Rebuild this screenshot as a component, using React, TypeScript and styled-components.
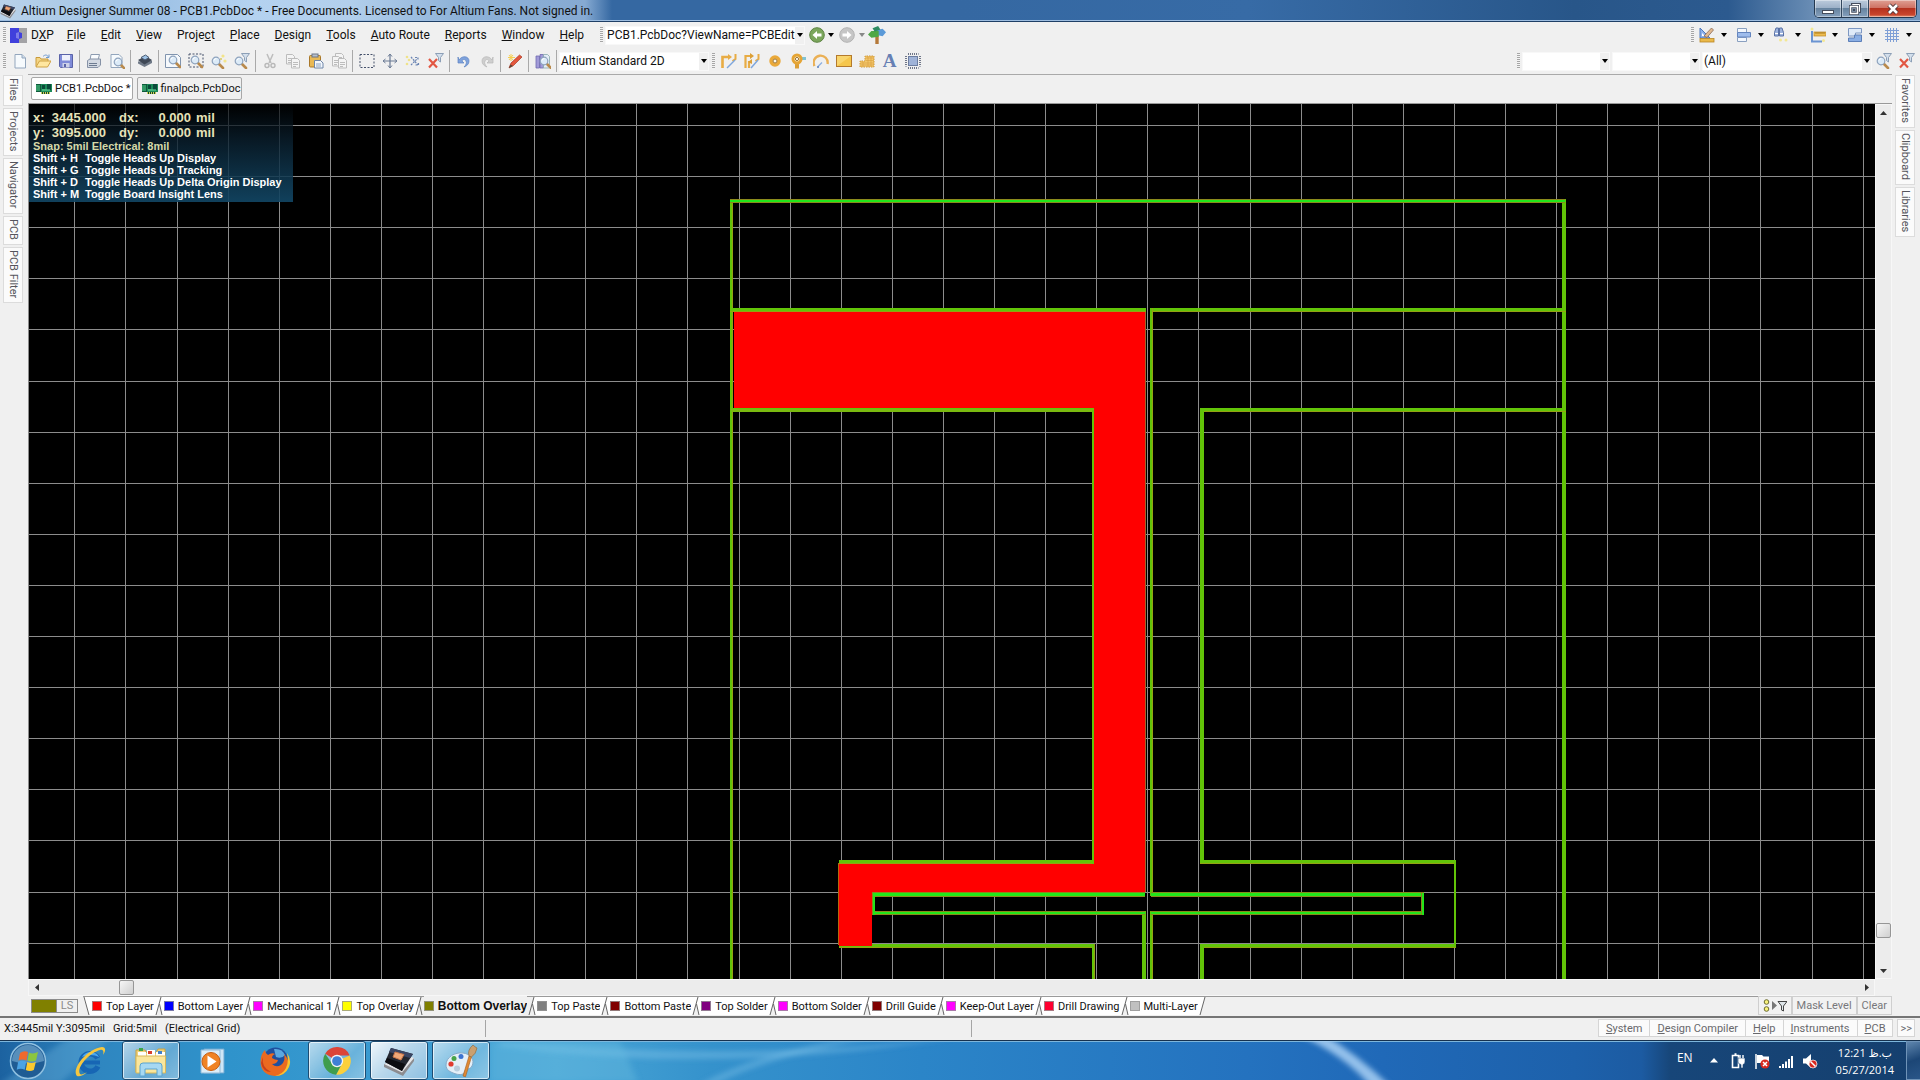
import React, { ReactNode } from "react";
import styled, { createGlobalStyle, css } from "styled-components";

const GlobalStyle = createGlobalStyle`
  *, *::before, *::after { box-sizing: border-box; }
  html, body { margin: 0; padding: 0; overflow: hidden; }
  body { background: #f0f0f0; color: #111; font-family: Roboto, "Liberation Sans", sans-serif; font-size: 12px; }
  button, select, input { font: inherit; color: inherit; margin: 0; padding: 0; border: 0; background: none; border-radius: 0; }
  svg { display: block; flex: none; }
`;

const Desktop = styled.div`
  display: flex;
  flex-direction: column;
  height: 100vh;
`;

/* ---------- title bar ---------- */
const TitleBar = styled.header`
  display: flex;
  align-items: flex-start;
  height: 22px;
  flex: none;
  border-bottom: 1px solid #1f3f66;
  box-shadow: inset 0 -1px 0 #9dbde0;
  background:
    linear-gradient(90deg, #b9d2ea 0, #9cc0e4 150px, #b4d2f0 250px, #b2cfec 350px, #8eb2d8 460px, #86aad2 585px, rgba(134, 170, 210, 0) 612px),
    linear-gradient(90deg, #3568a2 0 50%, #376ba6 65%, #285689 82%, #2c5a8f 90%, #7f9fc2 96%, #6f93ba 100%);
`;
const TitleCaption = styled.div`
  display: flex;
  align-items: center;
  gap: 5px;
  height: 21px;
  flex: 1;
`;
const TitleText = styled.h1`
  margin: 0;
  font-size: 12px;
  font-weight: 400;
  line-height: 20px;
  white-space: nowrap;
`;
const WindowButtons = styled.div`
  display: flex;
  height: 18px;
  margin-right: 3px;
  border: 1px solid #24384f;
  border-top: 0;
  border-radius: 0 0 5px 5px;
  overflow: hidden;
`;
const WindowButton = styled.button<{ $close?: boolean }>`
  display: flex;
  align-items: center;
  justify-content: center;
  width: ${(p) => (p.$close ? 47 : 27)}px;
  border-right: ${(p) => (p.$close ? "0" : "1px solid #33475e")};
  box-shadow: inset 0 0 0 1px rgba(255, 255, 255, 0.4);
  background: ${(p) =>
    p.$close
      ? "linear-gradient(#dfa094 0, #cf7264 45%, #b5321f 50%, #c8442c 85%, #e08a6c 100%)"
      : "linear-gradient(#bccbdc 0, #9db1c8 45%, #66839f 50%, #86a0bd 100%)"};
`;

/* ---------- menu and tool bars ---------- */
const Bar = styled.div`
  display: flex;
  align-items: center;
  height: 26px;
  padding-right: 2px;
  flex: none;
  background: #f0f0f0;
`;
const Spacer = styled.div`flex: 1;`;
const Grip = styled.span`
  width: 3px;
  height: 16px;
  margin: 0 2px 0 3px;
  flex: none;
  background: repeating-linear-gradient(#a6a6a6 0 1px, #f4f4f4 1px 2px);
`;
const MenuList = styled.nav`
  display: flex;
  align-items: center;
  margin-right: 5px;
`;
const MenuItem = styled.button`
  height: 22px;
  padding: 0 8px 0 7px;
  white-space: nowrap;
  u { text-underline-offset: 1px; }
`;
const DxpItem = styled(MenuItem)`
  display: flex;
  align-items: center;
  gap: 4px;
  padding: 0 6px 0 2px;
`;
const IconButton = styled.button<{ $w?: number }>`
  display: flex;
  align-items: center;
  justify-content: center;
  width: ${(p) => p.$w ?? 23}px;
  height: 22px;
  flex: none;
`;
const Separator = styled.span`
  width: 1px;
  height: 22px;
  margin: 0 2px;
  flex: none;
  background: #a9a9a9;
`;
const SelectBox = styled.label<{ $w: number }>`
  display: grid;
  grid-template-columns: 1fr 9px;
  align-items: center;
  width: ${(p) => p.$w}px;
  height: 19px;
  flex: none;
  background: #fff;
  border: 1px solid #f8f8f8;
  select {
    grid-area: 1 / 1 / 2 / 3;
    appearance: none;
    width: 100%;
    height: 17px;
    padding: 0 6px 0 1px;
    overflow: hidden;
  }
  i {
    grid-area: 1 / 2 / 2 / 3;
    display: flex;
    align-items: center;
    justify-content: center;
    height: 17px;
    background: #f0f0f0;
    pointer-events: none;
  }
`;
const Cluster = styled.div<{ $gap?: number }>`
  display: flex;
  align-items: center;
  gap: ${(p) => p.$gap ?? 0}px;
`;
const DropIcon = styled.button`
  display: flex;
  align-items: center;
  gap: 6px;
  width: 37px;
  padding-left: 3px;
  height: 22px;
`;

/* ---------- work area ---------- */
const WorkArea = styled.div`
  display: flex;
  flex: 1;
  min-height: 0;
`;
const Rail = styled.aside`
  display: flex;
  flex-direction: column;
  align-items: flex-start;
  gap: 2px;
  flex: none;
  width: 28px;
  padding: 1px 0 0 3px;
`;
const RailTab = styled.button`
  width: 20px;
  padding: 2px 0 4px;
  writing-mode: vertical-rl;
  font-size: 11px;
  line-height: 18px;
  color: #55555c;
  background: #fbfbfb;
  border: 1px solid #dcdcdc;
`;
const Center = styled.main`
  display: flex;
  flex-direction: column;
  flex: 1;
  min-width: 0;
  border-top: 1px solid #a9a9a9;
`;
const DocTabs = styled.div`
  display: flex;
  gap: 4px;
  height: 29px;
  padding: 2px 3px 3px;
  border-bottom: 1px solid #999;
  flex: none;
`;
const DocTab = styled.button<{ $active?: boolean }>`
  display: flex;
  align-items: center;
  gap: 3px;
  height: 23px;
  padding: 0 1px 0 4px;
  font-size: 11px;
  border: 1px solid #a8a8a8;
  border-radius: 2px;
  background: ${(p) => (p.$active ? "#fff" : "#f0f0f0")};
`;
const Editor = styled.div`
  display: grid;
  grid-template-columns: minmax(0, 1fr) 17px;
  grid-template-rows: minmax(0, 1fr) 17px;
  flex: 1;
  min-height: 0;
`;
const Board = styled.section`
  position: relative;
  overflow: hidden;
  background: #000;
  > svg { width: 100%; height: 100%; }
`;
const Hud = styled.div`
  position: absolute;
  left: 1px;
  top: 0;
  width: 264px;
  padding: 6px 4px 2px;
  color: #fff;
  background: linear-gradient(rgba(0, 0, 0, 0.65), rgba(10, 30, 44, 0.8) 35%, rgba(18, 70, 100, 0.92));
  font: bold 11px/12px "Liberation Sans", Arial, sans-serif;
`;
const HudCoords = styled.div`
  display: grid;
  grid-template-columns: 14px 59px 30px 55px 1fr;
  font-size: 13px;
  line-height: 15px;
  color: #e6e2b8;
  span:nth-child(5n + 2), span:nth-child(5n + 4) { text-align: right; }
  span:nth-child(5n + 3) { padding-left: 13px; }
  span:nth-child(5n) { padding-left: 5px; }
`;
const HudSnap = styled.p`
  margin: 0;
  color: #d5d9a8;
`;
const HudKeys = styled.dl`
  display: grid;
  grid-template-columns: 52px 1fr;
  margin: 0;
  dt, dd { margin: 0; white-space: nowrap; }
`;
const ScrollTrack = styled.div<{ $vertical?: boolean }>`
  display: flex;
  flex-direction: ${(p) => (p.$vertical ? "column" : "row")};
  align-items: center;
  background: #ececec;
  border: 1px solid #f7f7f7;
`;
const ScrollArrow = styled.button`
  display: flex;
  align-items: center;
  justify-content: center;
  width: 15px;
  height: 15px;
  flex: none;
`;
const ScrollGap = styled.span<{ $grow: number }>`flex: ${(p) => p.$grow} 1 0;`;
const ScrollThumb = styled.span`
  width: 15px;
  height: 15px;
  flex: none;
  border: 1px solid #969696;
  border-radius: 2px;
  background: linear-gradient(135deg, #f6f6f6, #cfcfcf);
`;

/* ---------- layer tabs ---------- */
const LayerBar = styled.div`
  display: flex;
  height: 22px;
  padding: 0 28px;
  flex: none;
  font-size: 11px;
  border-bottom: 2px solid #757575;
`;
const LayerSet = styled.button`
  display: grid;
  grid-template-columns: 25px 20px;
  align-items: center;
  height: 14px;
  margin: 3px 5px 0 3px;
  line-height: 12px;
  color: #8a8a8a;
  border: 1px solid #8c8c8c;
  span:first-child { height: 12px; background: #808000; border-right: 1px solid #8c8c8c; }
`;
const LayerStrip = styled.div`
  display: flex;
  flex: 1;
  border-top: 1px solid #9a9a9a;
`;
const LayerTab = styled.button<{ $active?: boolean }>`
  display: flex;
  align-items: center;
  gap: 4px;
  height: 18px;
  white-space: nowrap;
  background: ${(p) => (p.$active ? "#f0f0f0" : "#fff")};
  ${(p) => p.$active && css`margin-top: -1px; height: 19px; font: bold 12px "Liberation Sans", Arial, sans-serif;`}
`;
const Swatch = styled.span<{ $c: string }>`
  width: 10px;
  height: 10px;
  flex: none;
  background: ${(p) => p.$c};
  border: 1px solid rgba(150, 150, 150, 0.8);
`;
const MaskButton = styled.button`
  display: flex;
  align-items: center;
  justify-content: center;
  height: 19px;
  padding: 0 4px;
  color: #77777b;
  border: 1px solid #cfcfcf;
  background: #f2f2f2;
`;

/* ---------- status bar ---------- */
const StatusBar = styled.footer`
  display: grid;
  grid-template-columns: 482px 486px 1fr auto;
  align-items: center;
  height: 22px;
  padding: 0 5px 2px 4px;
  flex: none;
  font-size: 11px;
`;
const StatusCell = styled.div`
  display: flex;
  align-items: center;
  gap: 8px;
  height: 17px;
  border-right: 1px solid #a5a5a5;
  &:nth-child(3) { border: 0; }
`;
const Panels = styled.div`
  display: flex;
  color: #68686c;
`;
const PanelButton = styled.button`
  height: 18px;
  padding: 0 7px;
  margin-left: -1px;
  white-space: nowrap;
  background: #fbfbfb;
  border: 1px solid #d5d5d5;
  &:last-child { padding: 0 2px; margin-left: 4px; }
`;

/* ---------- task bar ---------- */
const TaskBar = styled.div`
  position: relative;
  display: flex;
  align-items: center;
  height: 40px;
  flex: none;
  border-top: 1px solid #17324f;
  box-shadow: inset 0 1px 0 #7db6dc;
  background: linear-gradient(90deg, #1c62a0 0, #2f86c0 5%, #2f93cb 12%, #3f9fd4 24%, #49a6d6 29%, #3592cc 37%, #2b85c8 48%, #2472bf 65%, #2069b8 72%, #1d61ab 82%, #1c5ba2 85.5%, #174679 87%, #153f6e 100%);
`;
const Rays = styled.svg`
  position: absolute;
  left: 0;
  top: 0;
  width: 100%;
  height: 100%;
`;
const TaskList = styled.div`
  position: relative;
  display: flex;
  align-items: center;
  gap: 4px;
  height: 39px;
`;
const TaskButton = styled.button<{ $state?: "open" | "front" }>`
  display: flex;
  align-items: center;
  justify-content: center;
  width: 58px;
  height: 39px;
  border-radius: 3px;
  border: 1px solid transparent;
  ${(p) =>
    p.$state &&
    css`
      border-color: #1d4c72;
      box-shadow: inset 0 0 0 1px rgba(255, 255, 255, 0.65);
      background: ${p.$state === "front"
        ? "linear-gradient(135deg, #f0f6fb, #b9d8ec 45%, #8dc0e2)"
        : "linear-gradient(135deg, rgba(255,255,255,0.65), rgba(255,255,255,0.25) 60%, rgba(255,255,255,0.4))"};
    `}
`;
const StartButton = styled(TaskButton)`width: 56px;`;
const Tray = styled.div`
  position: relative;
  display: flex;
  align-items: center;
  height: 39px;
  margin-left: auto;
  color: #fff;
  font: 12px "Open Sans", "DejaVu Sans", sans-serif;
`;
const Language = styled.button`
  margin-right: 9px;
  padding-bottom: 6px;
`;
const TrayButton = styled.button`
  display: flex;
  align-items: center;
  justify-content: center;
  width: 24px;
  height: 24px;
`;
const Clock = styled.time`
  margin: 0 12px 0 14px;
  font-size: 11px;
  line-height: 17px;
  text-align: center;
  white-space: nowrap;
`;
const ShowDesktop = styled.button`
  width: 14px;
  height: 39px;
  border: 1px solid #6f93b8;
  border-right: 0;
  background: linear-gradient(160deg, #5f86ae, #1c4676 50%, #2a5688);
`;

/* ---------- drawings ---------- */
const Svg = ({ s = 16, vb, children }: { s?: number; vb?: string; children: ReactNode }) => (
  <svg width={s} height={s} viewBox={vb ?? "0 0 16 16"} aria-hidden="true">{children}</svg>
);
const Caret = ({ c = "#000" }: { c?: string }) => (
  <svg width="6" height="4" viewBox="0 0 6 4" aria-hidden="true"><path d="M0 0h6L3 4z" fill={c} /></svg>
);
const Lens = ({ x = 0, y = 0 }: { x?: number; y?: number }) => (
  <g transform={`translate(${x} ${y})`}>
    <path d="M8 8l4 4" stroke="#b98a4c" strokeWidth="2.6" strokeLinecap="round" />
    <circle cx="5" cy="5" r="3.8" fill="#dcebf8" stroke="#8ea3bd" strokeWidth="1.2" />
    <path d="M3 4.500a2.400 2.400 0 0 1 2.400-2" stroke="#fff" fill="none" />
  </g>
);
const Funnel = ({ x = 0, y = 0 }: { x?: number; y?: number }) => (
  <path transform={`translate(${x} ${y})`} d="M0.500.500h8L5.500 4.500v4.500L3.500 7.500v-3z" fill="#d3dfec" stroke="#8c9fb6" />
);
const Page = ({ x = 0, y = 0 }: { x?: number; y?: number }) => (
  <g transform={`translate(${x} ${y})`} stroke="#bcbcbc">
    <path d="M.500.500h6l2 2v7.500h-8z" fill="#f4f4f4" />
    <path d="M2 4.500h5M2 6.500h5M2 8.500h3" />
  </g>
);

const icons: Record<string, ReactNode> = {
  new: <Svg><path d="M3 1.500h7l3.500 3.500v10H3z" fill="#f6fafd" stroke="#93a6bd" /><path d="M10 1.500V5h3.500" fill="#cfdcea" stroke="#93a6bd" /></Svg>,
  open: <Svg><path d="M1 13.500V4.500h4l1 1.500h7v3" fill="#f4d584" stroke="#c89a3a" /><path d="M1 14L4.500 8H16l-3.500 6z" fill="#ffe7a0" stroke="#cfa245" /><path d="M8 3.500c2-2 4-2 5.500.5M14 1.500V4.500h-3" fill="none" stroke="#6f9ad0" /></Svg>,
  save: <Svg><path d="M1.500 1.500h13v13h-12l-1-1z" fill="#7f8bd8" stroke="#5a63a8" /><path d="M4 2h8v5.500H4z" fill="#eef0fb" /><path d="M4.500 10h7v4.500h-7z" fill="#cdd2e8" /><path d="M6 11h2v3H6z" fill="#5a63a8" /></Svg>,
  print: <Svg><path d="M5 1.500h8.500L12 7H4z" fill="#fafcfe" stroke="#8c9bb0" /><path d="M1.500 7.500L4 6h10.500v6L12 14.500H1.500z" fill="#d3d9e2" stroke="#8692a6" /><path d="M3 10.500h8M3 12.500h8" stroke="#6d7b90" /></Svg>,
  preview: <Svg><path d="M2 1.500h8l3 3v10H2z" fill="#f6fafd" stroke="#93a6bd" /><Lens x={4} y={4} /></Svg>,
  layers: <Svg><path d="M1 8.500v2L7.500 14 15 10V7.500z" fill="#707a88" /><path d="M1 7L8.500 3 15 7 7.500 11.500z" fill="#3f4856" /><path d="M4 4.500L8.500 2 12 4.500 8 7z" fill="#9fc4e8" stroke="#4a5a70" /></Svg>,
  zoomDoc: <Svg><path d="M.500 1.500h12l3 3v10H.500z" fill="#f6f9fc" stroke="#8094ae" /><Lens x={3} y={2} /></Svg>,
  zoomArea: <Svg><rect x="1" y="1" width="14" height="13" fill="none" stroke="#44506a" strokeDasharray="2 1.500" /><Lens x={2} y={2} /></Svg>,
  zoomSel: <Svg><Lens x={0} y={3} /><circle cx="12" cy="3" r="1.600" fill="#f3e58a" /><circle cx="14" cy="8" r="1.600" fill="#f3e58a" /><circle cx="10" cy="6" r="1" fill="#d8c860" /></Svg>,
  zoomFilter: <Svg><Lens x={0} y={3} /><Funnel x={7} y={0} /></Svg>,
  cut: <Svg><path d="M5 1l4 9M11 1L7 10" stroke="#bdbdbd" strokeWidth="1.500" /><circle cx="5" cy="12.500" r="2" fill="none" stroke="#b8b8b8" strokeWidth="1.400" /><circle cx="11" cy="12.500" r="2" fill="none" stroke="#b8b8b8" strokeWidth="1.400" /></Svg>,
  copy: <Svg><Page x={1} y={1} /><Page x={6} y={5} /></Svg>,
  paste: <Svg><rect x="1.500" y="2.500" width="11" height="11.500" rx="1" fill="#e9b955" stroke="#a9782a" /><rect x="4" y="1" width="6" height="3" fill="#b8c0cc" stroke="#6d7686" /><path d="M6.500 7.500h6l2.500 2.500v5h-8.500z" fill="#f4f8fd" stroke="#6f86a8" /><path d="M8 11h5M8 13h5" stroke="#8ca3c2" /></Svg>,
  pasteArr: <Svg><Page x={4} y={0} /><Page x={1} y={3} /><Page x={7} y={5} /></Svg>,
  marquee: <Svg><rect x="1" y="1.500" width="14" height="13" fill="none" stroke="#44506a" strokeDasharray="2 1.500" /></Svg>,
  move: <Svg><path d="M8 1.500v13M1.500 8h13" stroke="#6a7a94" strokeWidth="1.200" /><path d="M6 3.500L8 1l2 2.500M6 12.500L8 15l2-2.500M3.500 6L1 8l2.500 2M12.500 6L15 8l-2.500 2" fill="none" stroke="#6a7a94" /></Svg>,
  shuffle: <Svg><path d="M6 12L13 5M6 4l7 8M10 4.500h3v3M10.500 12h3V9" fill="none" stroke="#6c86b4" strokeWidth="1.200" strokeDasharray="2 1" /><circle cx="2" cy="4" r="1.300" fill="#efe28a" /><circle cx="4" cy="7" r="1.300" fill="#efe28a" /><circle cx="2" cy="11" r="1.300" fill="#efe28a" /></Svg>,
  clearFilter: <Svg><Funnel x={7} y={0} /><path d="M1 6l8 8.500M9 6l-8 8.500" stroke="#e25743" strokeWidth="2.200" /></Svg>,
  undo: <Svg><path d="M3 7c3-5 10-4 10 1 0 3-2 5-5 6 2-2 3-4 2-6-1-2-3-2-4 0l2 2H2V4z" fill="#7ea2dc" stroke="#5c82c2" strokeWidth=".7" /></Svg>,
  redo: <Svg><path d="M13 7c-3-5-10-4-10 1 0 3 2 5 5 6-2-2-3-4-2-6 1-2 3-2 4 0l-2 2h6V4z" fill="#cfcfcf" stroke="#b8b8b8" strokeWidth=".7" /></Svg>,
  pencil: <Svg><path d="M2 15l2-5L12.500 2l2.500 2-8.500 8.500z" fill="#e4573d" stroke="#a83a24" strokeWidth=".7" /><path d="M2 15l1.500-3.500L6 13z" fill="#5a4638" /><path d="M4 1v7M1 4.500h7M2 2l4 5M6 2L2 7" stroke="#f6cf52" /></Svg>,
  browse: <Svg><path d="M1 3h3.500v12H1zM5 1.500h3.500V15H5z" fill="#a19ad8" stroke="#6f6ab0" strokeWidth=".8" /><path d="M8.500 1.500h4l2 2V15h-6z" fill="#e4edf7" stroke="#8aa" strokeWidth=".8" /><Lens x={4} y={3} /></Svg>,
  route: <Svg><path d="M1.500 15V4h6" fill="none" stroke="#e8ac44" strokeWidth="2.600" /><path d="M7 1l4 3-4 3z" fill="#e8ac44" /><path d="M14.500 1v5l-3 2" fill="none" stroke="#e8ac44" strokeWidth="2" /><path d="M6 15l8-8" stroke="#7ea6dc" strokeWidth="1.500" /></Svg>,
  routeDiff: <Svg><path d="M1.500 15V3h6M5 15V8" fill="none" stroke="#e8ac44" strokeWidth="2.200" /><path d="M6 0l4 3-4 3zM4 9l4-3v5z" fill="#dc9f36" /><path d="M14.500 1v5l-3 2" fill="none" stroke="#e8ac44" strokeWidth="2" /><path d="M7 15l7-8" stroke="#7ea6dc" strokeWidth="1.500" /></Svg>,
  pad: <Svg><circle cx="8" cy="8" r="4" fill="#fff3d4" stroke="#eaa93a" strokeWidth="3.400" /><circle cx="8" cy="8" r="2" fill="#fdf8ec" stroke="#9d7430" /></Svg>,
  via: <Svg><path d="M9 4h7v3H9z" fill="#7fc3d4" /><path d="M5 8h4v7.500H5z" fill="#dc9f36" /><circle cx="7" cy="6" r="4" fill="#fff3d4" stroke="#e5a536" strokeWidth="3" /><circle cx="7" cy="6" r="1.600" fill="#fff" stroke="#9d7430" /></Svg>,
  arc: <Svg><path d="M1.500 13A7 7 0 1 1 14.500 11" fill="none" stroke="#eab055" strokeWidth="2.400" /><path d="M5 13.500l4-4" stroke="#8aaee0" strokeWidth="1.200" /><circle cx="5" cy="14" r="1" fill="#5a7fc0" /></Svg>,
  fill: <Svg><rect x=".500" y="2.500" width="15" height="11" fill="#f5c64c" stroke="#b47a2c" /><path d="M1 13L15 3H1z" fill="#fbdf84" opacity=".6" /></Svg>,
  polygon: <Svg><path d="M1 14V8h5V3h9v11z" fill="#f3c76a" stroke="#cf9636" strokeDasharray="1.500 1" /><path d="M2 10h13M2 12h13M7 5h8M7 7.500h8M9 3v11M12 3v11M4 9v5" stroke="#d8a040" strokeWidth=".6" /></Svg>,
  part: <Svg><rect x="3.500" y="3.500" width="9" height="9" fill="#9fb3d8" stroke="#6c7da0" /><path d="M3 1h10.500M3 15h10.500" stroke="#444e66" strokeWidth="1.500" strokeDasharray="1 1" /><path d="M1 3v10.500M15 3v10.500" stroke="#444e66" strokeWidth="1.500" strokeDasharray="1 1" /></Svg>,
  utility: <Svg><path d="M1 1v10h10z" fill="#8cb0ea" stroke="#4f78bc" /><path d="M3 6v3h3z" fill="#fff" /><path d="M5 9L12.500 1l2 2L8 10.500z" fill="#e0b890" stroke="#80604a" strokeWidth=".7" /><rect x="1" y="11.500" width="14" height="3.500" fill="#eab94a" stroke="#b98524" strokeWidth=".8" /></Svg>,
  align: <Svg><path d="M1.500 1.500h9v4h-9zM1.500 10.500h9v4h-9z" fill="#f4f8fd" stroke="#8aa0c0" /><path d="M1.500 5.500h13v4.500h-13z" fill="#9fbdec" stroke="#6485bf" /></Svg>,
  find: <Svg><path d="M1.500 9V5.500L3 1h2.500v8zM10.500 9V5.500L9 1H6.500v8z" fill="#9db3dd" stroke="#5a72a6" /><path d="M2 6.500h3M7 6.500h3" stroke="#fff" /><circle cx="7.500" cy="13" r="1.500" fill="#f3e894" /><circle cx="13" cy="13" r="1.500" fill="#f3e894" /></Svg>,
  dimension: <Svg><path d="M2 4v10.500h10" fill="none" stroke="#6b94d2" strokeWidth="2" /><rect x="4" y="5" width="12" height="4" fill="#eebd50" stroke="#b98524" strokeWidth=".7" /><path d="M6 5v2M8 5v2M10 5v2M12 5v2M14 5v2" stroke="#8a6010" strokeWidth=".7" /><circle cx="2" cy="2" r="1.500" fill="#f3e894" /><circle cx="13.500" cy="13.500" r="1.500" fill="#f3e894" /></Svg>,
  room: <Svg><path d="M1.500 1.500h13v4.500h-6v3h-7z" fill="#dfeaf8" stroke="#7d97c2" /><path d="M1.500 14.500v-3.500h6V8h7v6.500z" fill="#8aaee4" stroke="#5c7fb8" /></Svg>,
  grid: <Svg><path d="M3.500 1v14M6.500 1v14M9.500 1v14M12.500 1v14M1 3.500h14M1 6.500h14M1 9.500h14M1 12.500h14" stroke="#7f9fd6" /></Svg>,
  applyFilter: <Svg><Lens x={0} y={3} /><Funnel x={7} y={0} /></Svg>,
  back: <Svg><circle cx="8" cy="8" r="7.300" fill="#7ba65c" stroke="#5d8442" /><path d="M3.500 8L8 4v2.500h4.500v3H8V12z" fill="#fff" /></Svg>,
  forward: <Svg><circle cx="8" cy="8" r="7.300" fill="#c6c6c6" stroke="#b2b2b2" /><path d="M12.500 8L8 4v2.500H3.500v3H8V12z" fill="#fff" /></Svg>,
  signpost: <Svg s={18}><path d="M6.500 6h3v10h-3z" fill="#b5793a" /><path d="M8 3.500L13 2.500l3 3-3 3.500-5-1z" fill="#5b9ad8" /><path d="M9.500 4.500H3L0 7.500l3 3 6.500-1z" fill="#4fa845" /><path d="M4 2l5-2 2 3-5 2z" fill="#2f8c62" /></Svg>,
};
const TextToolButton = styled(IconButton)`
  font: bold 19px/22px "Liberation Serif", "Times New Roman", serif;
  color: #6680b4;
`;

const AppIcon = ({ s = 16 }: { s?: number }) => (
  <svg width={s} height={s} viewBox="0 0 32 32" aria-hidden="true">
    <path d="M1 22l19 9 11-15v-3L1 19z" fill="#8c8c90" />
    <path d="M1 19l18 8.500L31 13l-3-1z" fill="#e6e6e8" />
    <path d="M2 17L8 3l22 6-11 17z" fill="#23262f" />
    <path d="M2 17l2-4 18 6-3 7z" fill="#0c0c10" />
    <path d="M8 3l22 6-3 4L6 7z" fill="#3a4563" />
    <path d="M12 7l9 2.500-3 5.500-8-3z" fill="#f0a878" stroke="#c9764a" />
  </svg>
);
const DocIcon = () => (
  <svg width="16" height="12" viewBox="0 0 16 12" aria-hidden="true">
    <rect x="0" y="1" width="16" height="8" fill="#1c8a58" />
    <path d="M0 1h5v8H0z" fill="#0f5a3c" /><path d="M1 2v6M3 2v6" stroke="#58d890" />
    <path d="M6 2h3v4H6zM11 1h4v6h-4z" fill="#0b4a3a" /><path d="M5 9h9v2H5z" fill="#cdd15a" /><path d="M6.500 9v2M8.500 9v2M10.500 9v2M12.500 9v2" stroke="#164a2c" />
    <path d="M6 7h8" stroke="#6fe0a0" />
  </svg>
);
const DxpLogo = () => (
  <svg width="17" height="15" viewBox="0 0 17 15" aria-hidden="true">
    <path d="M8 0h9v15H8z" fill="#a3a3a6" />
    <path d="M0 0h9v4l3 1v5l-3 1v4H0z" fill="#4040dc" /><path d="M6 5l3-1v7L6 10z" fill="#7b7be8" />
  </svg>
);

/* ---------- board canvas ---------- */
const GREEN = "#62c408", OLIVE = "#93a312", BRIGHT = "#22e61a";
const ORIGIN = { x: 28, y: 104 };
const gridX = Array.from({ length: 37 }, (_, k) => Math.floor(74.85 + 51.094 * k));
const gridY = Array.from({ length: 18 }, (_, k) => Math.floor(125.6 + 51.094 * k));
type Seg = [number, number, number, number, ("b")?];
const tracks: Seg[] = [
  [730, 201, 3, 900], [1562, 199, 4, 900],
  [730, 308, 416, 4], [1151, 308, 415, 4],
  [731, 408, 363, 4], [1092, 410, 2, 453],
  [1150, 308, 3, 588], [1200, 408, 366, 4], [1200, 408, 4, 455],
  [839, 860, 255, 4], [1200, 860, 256, 4], [1454, 861, 2, 87],
  [839, 944, 255, 4], [1200, 944, 256, 4],
  [1092, 944, 3, 100], [1142, 911, 4, 100], [1150, 911, 3, 100], [1200, 944, 4, 100],
  [730, 199, 835, 4, "b"],
  [872, 892, 273, 5, "b"], [872, 911, 273, 4, "b"], [1151, 892, 273, 5, "b"], [1151, 911, 273, 4, "b"],
  [872, 893, 3, 22, "b"], [1421, 893, 3, 22, "b"],
];
const Artwork = () => (
  <svg role="img" aria-label="PCB layout" shapeRendering="crispEdges">
    <g transform={`translate(${-ORIGIN.x} ${-ORIGIN.y})`}>
      {gridX.map((x) => <rect key={x} x={x} y={104} width={1} height={2000} fill="#8c8c8c" />)}
      {gridY.map((y) => <rect key={y} x={28} y={y} width={3000} height={1} fill="#8c8c8c" />)}
      <rect x={28} y={104} width={1} height={2000} fill="#8c8c8c" />
      {tracks.map(([x, y, w, h, kind], i) => {
        const flat = w > h;
        return (
          <g key={i}>
            <rect x={x} y={y} width={w} height={h} fill={kind ? "#8a8a1c" : OLIVE} />
            {flat
              ? <rect x={x} y={kind ? y + 1 : y} width={w} height={kind ? h - 2 : h - 1} fill={kind ? BRIGHT : GREEN} />
              : <rect x={kind ? x + 1 : x} y={y} width={w > 3 ? w : Math.max(w - 1, 2)} height={h} fill={kind ? BRIGHT : GREEN} />}
          </g>
        );
      })}
      <path d="M734 312H1145V892H872V946H839V864H1094V408H734z" fill="#f00" />
      <rect x={731} y={409} width={363} height={3} fill="#7aba10" />
      <rect x={1092} y={410} width={2} height={454} fill={GREEN} />
      <rect x={1145} y={312} width={1} height={580} fill="#a0662a" />
      <rect x={838} y={863} width={1} height={82} fill="#b06a10" />
    </g>
  </svg>
);

/* ---------- data ---------- */
const menus: [string, string, string][] = [
  ["", "F", "ile"], ["", "E", "dit"], ["", "V", "iew"], ["Proje", "c", "t"], ["", "P", "lace"], ["", "D", "esign"],
  ["", "T", "ools"], ["", "A", "uto Route"], ["", "R", "eports"], ["", "W", "indow"], ["", "H", "elp"],
];
const toolGroups = [
  ["new", "open", "save"], ["print", "preview"], ["layers"], ["zoomDoc", "zoomArea", "zoomSel", "zoomFilter"],
  ["cut", "copy", "paste", "pasteArr"], ["marquee", "move", "shuffle", "clearFilter"], ["undo", "redo"], ["pencil"], ["browse"],
];
const placeTools = ["route", "routeDiff", "pad", "via", "arc", "fill", "polygon"];
const layers: [string, string][] = [
  ["Top Layer", "#f00"], ["Bottom Layer", "#00f"], ["Mechanical 1", "#f0f"], ["Top Overlay", "#ff0"], ["Bottom Overlay", "#808000"],
  ["Top Paste", "#808080"], ["Bottom Paste", "#800000"], ["Top Solder", "#800080"], ["Bottom Solder", "#f0f"],
  ["Drill Guide", "#800000"], ["Keep-Out Layer", "#f0f"], ["Drill Drawing", "#ff0030"], ["Multi-Layer", "#c0c0c0"],
];
const activeLayer = "Bottom Overlay";
const panels: [string, string][] = [["S", "ystem"], ["D", "esign Compiler"], ["H", "elp"], ["I", "nstruments"], ["P", "CB"]];

const Combo = ({ w, label, value }: { w: number; label: string; value: string }) => (
  <SelectBox $w={w}>
    <select aria-label={label} defaultValue={value}><option>{value}</option></select>
    <i><Caret /></i>
  </SelectBox>
);
/* slanted joint between two neighbouring layer tabs */
const Joint = ({ left, right }: { left: string; right?: string }) => (
  <svg width="10" height="19" viewBox="0 0 10 19" aria-hidden="true">
    <path d="M0 0h7L2 18H0z" fill={left} />
    {right && <path d="M7 0h3v18H8L5.500 7z" fill={right} />}
    <path d={right ? "M2 18L7 0M5.500 7L8 18" : "M2 18L7 0"} fill="none" stroke="#666" />
  </svg>
);
const tabFill = (name?: string) => (name === undefined ? undefined : name === activeLayer ? "#f0f0f0" : "#fff");

export default function App() {
  return (
    <Desktop>
      <GlobalStyle />
      <TitleBar>
        <TitleCaption>
          <AppIcon />
          <TitleText>Altium Designer Summer 08 - PCB1.PcbDoc * - Free Documents. Licensed to For Altium Fans. Not signed in.</TitleText>
        </TitleCaption>
        <WindowButtons>
          <WindowButton aria-label="Minimize"><svg width="12" height="14" viewBox="0 0 12 14"><rect x=".5" y="8.5" width="11" height="3" fill="#fff" stroke="#444c5c" /></svg></WindowButton>
          <WindowButton aria-label="Restore"><svg width="14" height="14" viewBox="0 0 14 14"><path d="M4.500 2.500h7v7h-7z" fill="none" stroke="#444c5c" strokeWidth="3" /><path d="M4.500 2.500h7v7h-7z" fill="none" stroke="#fff" /><path d="M2.500 4.500h7v7h-7z" fill="#7b8da3" stroke="#444c5c" strokeWidth="3" /><path d="M2.500 4.500h7v7h-7z" fill="none" stroke="#fff" strokeWidth="1.500" /><path d="M5 7h2v2H5z" fill="#444c5c" /></svg></WindowButton>
          <WindowButton $close aria-label="Close"><svg width="14" height="12" viewBox="0 0 14 12"><path d="M3 2l8 8M11 2l-8 8" stroke="#4a3438" strokeWidth="4.500" /><path d="M3 2l8 8M11 2l-8 8" stroke="#fff" strokeWidth="2.600" /></svg></WindowButton>
        </WindowButtons>
      </TitleBar>

      <Bar>
        <Grip />
        <MenuList>
          <DxpItem><DxpLogo /><span>D<u>X</u>P</span></DxpItem>
          {menus.map(([a, b, c]) => <MenuItem key={b + c}>{a}<u>{b}</u>{c}</MenuItem>)}
        </MenuList>
        <Grip />
        <Combo w={200} label="Document address" value="PCB1.PcbDoc?ViewName=PCBEdit" />
        <Cluster>
          <IconButton aria-label="Back">{icons.back}</IconButton><Caret />
          <IconButton aria-label="Forward" $w={25}>{icons.forward}</IconButton><Caret c="#888" />
          <IconButton aria-label="Navigate">{icons.signpost}</IconButton>
        </Cluster>
        <Spacer />
        <Grip />
        {["utility", "align", "find", "dimension", "room", "grid"].map((n) => (
          <DropIcon key={n} aria-label={n}>{icons[n]}<Caret /></DropIcon>
        ))}
      </Bar>

      <Bar>
        <Grip />
        {toolGroups.map((g, i) => (
          <React.Fragment key={i}>
            {i > 0 && <Separator />}
            {g.map((n) => <IconButton key={n} aria-label={n}>{icons[n]}</IconButton>)}
          </React.Fragment>
        ))}
        <Separator />
        <Combo w={150} label="View configuration" value="Altium Standard 2D" />
        <Grip />
        {placeTools.map((n) => <IconButton key={n} aria-label={n}>{icons[n]}</IconButton>)}
        <TextToolButton aria-label="Place string">A</TextToolButton>
        <IconButton aria-label="Place component">{icons.part}</IconButton>
        <Spacer />
        <Grip />
        <Cluster $gap={2}>
          <Combo w={88} label="Net filter" value="" />
          <Combo w={88} label="Component filter" value="" />
          <Combo w={170} label="Filter" value="(All)" />
        </Cluster>
        <IconButton aria-label="Apply filter">{icons.applyFilter}</IconButton>
        <IconButton aria-label="Clear filter">{icons.clearFilter}</IconButton>
      </Bar>

      <WorkArea>
        <Rail>{["Files", "Projects", "Navigator", "PCB", "PCB Filter"].map((t) => <RailTab key={t}>{t}</RailTab>)}</Rail>
        <Center>
          <DocTabs>
            <DocTab $active><DocIcon />PCB1.PcbDoc *</DocTab>
            <DocTab><DocIcon />finalpcb.PcbDoc</DocTab>
          </DocTabs>
          <Editor>
            <Board>
              <Artwork />
              <Hud>
                <HudCoords>
                  <span>x:</span><span>3445.000</span><span>dx:</span><span>0.000</span><span>mil</span>
                  <span>y:</span><span>3095.000</span><span>dy:</span><span>0.000</span><span>mil</span>
                </HudCoords>
                <HudSnap>Snap: 5mil Electrical: 8mil</HudSnap>
                <HudKeys>
                  <dt>Shift + H</dt><dd>Toggle Heads Up Display</dd>
                  <dt>Shift + G</dt><dd>Toggle Heads Up Tracking</dd>
                  <dt>Shift + D</dt><dd>Toggle Heads Up Delta Origin Display</dd>
                  <dt>Shift + M</dt><dd>Toggle Board Insight Lens</dd>
                </HudKeys>
              </Hud>
            </Board>
            <ScrollTrack $vertical>
              <ScrollArrow aria-label="Scroll up"><svg width="7" height="4"><path d="M0 4L3.500 0 7 4z" fill="#333" /></svg></ScrollArrow>
              <ScrollGap $grow={803} /><ScrollThumb /><ScrollGap $grow={25} />
              <ScrollArrow aria-label="Scroll down"><svg width="7" height="4"><path d="M0 0h7L3.500 4z" fill="#333" /></svg></ScrollArrow>
            </ScrollTrack>
            <ScrollTrack>
              <ScrollArrow aria-label="Scroll left"><svg width="4" height="7"><path d="M4 0v7L0 3.500z" fill="#333" /></svg></ScrollArrow>
              <ScrollGap $grow={75} /><ScrollThumb /><ScrollGap $grow={1724} />
              <ScrollArrow aria-label="Scroll right"><svg width="4" height="7"><path d="M0 0v7l4-3.500z" fill="#333" /></svg></ScrollArrow>
            </ScrollTrack>
          </Editor>
        </Center>
        <Rail>{["Favorites", "Clipboard", "Libraries"].map((t) => <RailTab key={t}>{t}</RailTab>)}</Rail>
      </WorkArea>

      <LayerBar>
        <LayerSet aria-label="Layer sets"><span /><span>LS</span></LayerSet>
        <LayerStrip>
          <svg width="9" height="19" viewBox="0 0 9 19" aria-hidden="true"><path d="M0 0h9v18H6z" fill="#fff" /><path d="M1 0l5 18" stroke="#666" /></svg>
          {layers.map(([name, c], i) => (
            <React.Fragment key={name}>
              <LayerTab $active={name === activeLayer}><Swatch $c={c} />{name}</LayerTab>
              <Joint left={tabFill(name)!} right={tabFill(layers[i + 1]?.[0])} />
            </React.Fragment>
          ))}
        </LayerStrip>
        <MaskButton aria-label="Mask options">
          <svg width="24" height="13" viewBox="0 0 24 13"><circle cx="3.500" cy="3" r="2.300" fill="#f8f27a" stroke="#6b6b30" /><circle cx="3.500" cy="10" r="2.300" fill="#f8f27a" stroke="#6b6b30" /><path d="M9 2l5 4.500L9 11z" fill="#777" /><path d="M15 2.500h9L20.500 7v5l-2-1V7z" fill="#dfe6ea" stroke="#444" /></svg>
        </MaskButton>
        <MaskButton>Mask Level</MaskButton>
        <MaskButton>Clear</MaskButton>
      </LayerBar>

      <StatusBar>
        <StatusCell><span>X:3445mil Y:3095mil</span><span>Grid:5mil</span><span>(Electrical Grid)</span></StatusCell>
        <StatusCell />
        <StatusCell />
        <Panels>
          {panels.map(([a, b]) => <PanelButton key={b}><u>{a}</u>{b}</PanelButton>)}
          <PanelButton>&gt;&gt;</PanelButton>
        </Panels>
      </StatusBar>

      <TaskBar>
        <Rays viewBox="0 0 1920 40" preserveAspectRatio="none" aria-hidden="true">
          <defs>
            <filter id="soft" x="-20%" y="-20%" width="140%" height="140%"><feGaussianBlur stdDeviation="3" /></filter>
          </defs>
          <g filter="url(#soft)">
            <path d="M1295 -8Q1345 14 1372 48H1392Q1358 14 1322 -8z" fill="#a9d0f5" opacity=".85" />
            <path d="M500 6Q720 36 960 -4 740 22 500 0z" fill="#8ccbee" opacity=".35" />
            <path d="M700 44Q760 10 860 -4h16Q770 16 716 44z" fill="#8ccbee" opacity=".35" />
            <path d="M490 0h130l18 42H490z" fill="#6cc0e2" opacity=".35" />
            <path d="M0 44L70 -4h40L60 44z" fill="#7fc4e8" opacity=".3" />
          </g>
        </Rays>
        <TaskList>
          <StartButton aria-label="Start">
            <Svg s={38} vb="0 0 38 38">
              <circle cx="19" cy="19" r="17.500" fill="#1f5c94" stroke="#8fc0e0" strokeWidth="1.500" />
              <path d="M3 19a16 16 0 0 1 32 0q-16 5-32 0z" fill="#7db0d6" opacity=".6" />
              <path d="M11 11q4-3 8-1l-1.500 8.500q-4-2-8 0z" fill="#f06a2c" /><path d="M20 10.500q4 2 9-.5l-2 8.500q-4 2-8.500 0z" fill="#8cc63e" />
              <path d="M9.200 19.800q4-2 8 0l-1.500 8q-4-2-8 0z" fill="#4aa3e4" /><path d="M18.300 20q4 2 8.500 0l-2 8q-4 2-8 0z" fill="#fbc92e" />
            </Svg>
          </StartButton>
          <TaskButton aria-label="Internet Explorer">
            <Svg s={34} vb="0 0 34 34">
              <circle cx="18" cy="18.500" r="8.800" fill="none" stroke="#1766b4" strokeWidth="5.500" strokeDasharray="46.500 9" strokeDashoffset="-4" />
              <path d="M11 16.500h17v4H11z" fill="#1766b4" />
              <path d="M10 13q3-5 9-5 6 .5 8 5-8-4-17 0z" fill="#4aa8ee" />
              <path d="M5 32C-1 26 14 5 30 3c4 0 4 4 1 8 1-4 0-6-3-5C17 9 4 24 8 30c1 1 4 0 7-2-4 4-8 5-10 4z" fill="#f5c740" />
            </Svg>
          </TaskButton>
          <TaskButton $state="open" aria-label="Windows Explorer">
            <Svg s={34} vb="0 0 34 34">
              <path d="M2 6h9l2 3h9l2-4h7v23H2z" fill="#f0d27c" stroke="#c9a243" />
              <path d="M4 8h8v4H4zM13 6h8v6h-8zM22 8h9v5h-9z" fill="#fff" /><path d="M5 4h4v3H5z" fill="#3aa64a" /><path d="M14 7h4v3h-4z" fill="#d8402c" /><path d="M24 7h4v3h-4z" fill="#3f80cc" />
              <path d="M2 12h29.500v17H2z" fill="#fae69c" stroke="#d8b85a" />
              <path d="M6 32V22q0-3 3-3h16q3 0 3 3v10h-5v-7H11v7z" fill="#a6d8f2" stroke="#5aa4d0" />
            </Svg>
          </TaskButton>
          <TaskButton aria-label="Media Player">
            <Svg s={30} vb="0 0 30 30">
              <path d="M6 3h20v24H6z" fill="#cfe6f6" stroke="#6da8d2" /><path d="M3 4h19v23H3z" fill="#dcedf8" stroke="#8fb9d8" />
              <circle cx="13" cy="15.500" r="9" fill="#f08324" stroke="#c85e10" /><path d="M9.500 9.500l9 6-9 6z" fill="#fff" />
            </Svg>
          </TaskButton>
          <TaskButton aria-label="Firefox">
            <Svg s={32} vb="0 0 32 32">
              <circle cx="16.500" cy="15" r="12.500" fill="#1f4f9e" /><path d="M15 4q8-1 11 6-3 4-9 2z" fill="#5ba8e0" />
              <path d="M6 5q0 3 3 5 4-3 7-1-3 1-3 4 3 2 6 2-1 4-6 4 4 4 9 1 5-4 3-11 6 6 4 13-3 9-13 9Q2 30 1.500 17 1.500 9 6 5z" fill="#ea6a20" />
              <path d="M28 8q5 7 2 14-4 9-14 9 8-2 11-8t1-15z" fill="#f9c22e" /><path d="M4 12q-2 10 8 15-8 0-10-9z" fill="#c8401c" />
            </Svg>
          </TaskButton>
          <TaskButton $state="open" aria-label="Chrome">
            <Svg s={30} vb="0 0 32 32">
              <path d="M16 16L3.400 8.300A14.700 14.700 0 0 1 29.500 10H16z" fill="#dc4437" />
              <path d="M16 16l13.500-6A14.700 14.700 0 0 1 15 30.600L21.200 19z" fill="#fbd03b" />
              <path d="M16 16l5.200 3L15 30.700A14.700 14.700 0 0 1 3.400 8.300L10.800 19z" fill="#3f9d4e" />
              <circle cx="16" cy="16" r="6.600" fill="#f4f4f4" /><circle cx="16" cy="16" r="5.200" fill="#3f80d6" />
            </Svg>
          </TaskButton>
          <TaskButton $state="front" aria-label="Altium Designer"><AppIcon s={32} /></TaskButton>
          <TaskButton $state="open" aria-label="Paint">
            <Svg s={34} vb="0 0 34 34">
              <path d="M2 21C2 13 11 8 19 9c8 1 12 7 9 13-2 4-6 2-7 5-1 4-5 4-9 3C6 28 2 26 2 21z" fill="#e4eff8" stroke="#86a9c6" />
              <circle cx="7" cy="20" r="2.600" fill="#e03c30" /><circle cx="10" cy="14.500" r="2.500" fill="#48a44a" /><circle cx="17" cy="12.500" r="2.500" fill="#3c74d0" /><circle cx="13" cy="24.500" r="3" fill="#b8cede" />
              <path d="M19 32l6-20 2.500.800-6 20z" fill="#e08a34" stroke="#a85c1c" strokeWidth=".6" /><path d="M25 12q-2-6 4-11 2 2 4 3-1 6-5.500 9z" fill="#c9a070" stroke="#8a6438" strokeWidth=".6" />
            </Svg>
          </TaskButton>
        </TaskList>
        <Tray>
          <Language>EN</Language>
          <TrayButton aria-label="Show hidden icons"><svg width="8" height="5"><path d="M0 4.500L4 0l4 4.500z" fill="#fff" /></svg></TrayButton>
          <TrayButton aria-label="Power"><Svg><path d="M2.500 2.500h6v12h-6zM4.500 1h2" fill="none" stroke="#fff" strokeWidth="1.600" /><path d="M8 5h7v4q0 2-2 2.500V15h-2v-3.500Q8 11 8 9z" fill="#fff" stroke="#163f70" strokeWidth=".6" /><path d="M10 2v3M13 2v3" stroke="#fff" strokeWidth="1.400" /></Svg></TrayButton>
          <TrayButton aria-label="Action Center"><Svg><path d="M2 1v15" stroke="#fff" strokeWidth="1.500" /><path d="M3 2h5l1.500 1.500H15V10H3z" fill="#fff" /><circle cx="11" cy="11" r="4.600" fill="#d8281e" /><path d="M9 9l4 4M13 9l-4 4" stroke="#fff" strokeWidth="1.500" /></Svg></TrayButton>
          <TrayButton aria-label="Network"><Svg><path d="M1 13h2v2H1zM4 11h2v4H4zM7 8.500h2V15H7zM10 6h2v9h-2zM13 3h2v12h-2z" fill="#fff" /></Svg></TrayButton>
          <TrayButton aria-label="Volume"><Svg><path d="M1 5.500h3L9 1v14l-5-4.500H1z" fill="#fff" /><circle cx="11" cy="11" r="4" fill="#d8281e" stroke="#fff" strokeWidth=".7" /><path d="M8.500 8.500l5 5" stroke="#fff" strokeWidth="1.500" /></Svg></TrayButton>
          <Clock>12:21 ب.ظ<br />05/27/2014</Clock>
          <ShowDesktop aria-label="Show desktop" />
        </Tray>
      </TaskBar>
    </Desktop>
  );
}
